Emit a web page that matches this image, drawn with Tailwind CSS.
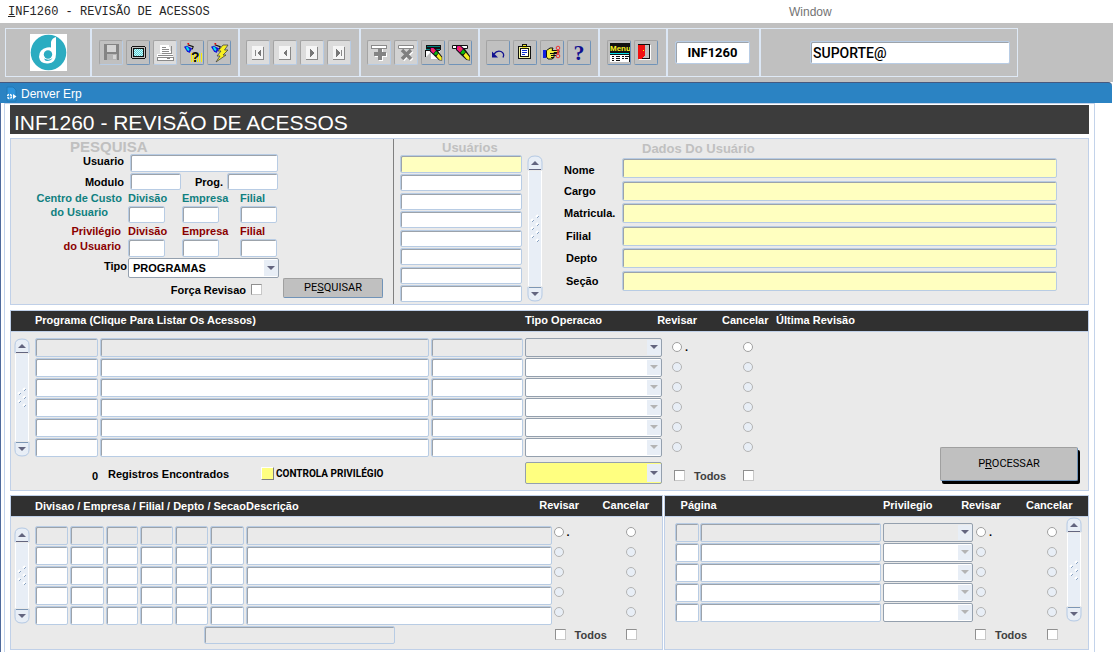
<!DOCTYPE html>
<html lang="pt-BR">
<head>
<meta charset="utf-8">
<meta name="viewport" content="width=device-width, initial-scale=1">
<title>INF1260 - Revisão de Acessos</title>
<script src="https://cdn.jsdelivr.net/npm/@tailwindcss/browser@4"></script>
</head>
<body class="bg-white font-['Liberation_Sans',Arial,sans-serif] text-[11px] leading-[14px] text-black">

<svg class="hidden" aria-hidden="true">
  <symbol id="up" viewBox="0 0 16 16"><path d="M1 15V7Q1 1 8 1T15 7V15" fill="#e8eef6" stroke="#b4c9e4"/><path d="M8 6L12 10H4Z" fill="#63657f"/><path d="M2 14.500H14" stroke="#63657f"/></symbol>
  <symbol id="down" viewBox="0 0 16 16"><path d="M1 1V9Q1 15 8 15T15 9V1" fill="#e8eef6" stroke="#b4c9e4"/><path d="M8 10L12 6H4Z" fill="#63657f"/><path d="M2 1.500H14" stroke="#7d97b5"/></symbol>
  <symbol id="grip" viewBox="0 0 12 30"><g stroke="#fff" stroke-width="2"><path d="M7 3l2-2M2 7l2-2M7 11l2-2M2 15l2-2M7 19l2-2M2 23l2-2M7 27l2-2"/></g><g stroke="#8aa3c2"><path d="M8 4l2-2M3 8l2-2M8 12l2-2M3 16l2-2M8 20l2-2M3 24l2-2M8 28l2-2"/></g></symbol>
  <symbol id="grip-s" viewBox="0 0 12 20"><g stroke="#fff" stroke-width="2"><path d="M7 3l2-2M2 7l2-2M7 11l2-2M2 15l2-2M7 19l2-2"/></g><g stroke="#8aa3c2"><path d="M8 4l2-2M3 8l2-2M8 12l2-2M3 16l2-2M8 20l2-2"/></g></symbol>
  <symbol id="arrow" viewBox="0 0 8 4"><path d="M0 0H8L4 4Z" fill="currentColor"/></symbol>
  <symbol id="torch" viewBox="0 0 12 12"><path d="M0 4L3 3L9 6L6 11L3 9Z" fill="#1414d8"/><path d="M2 4L4 4L6 7L5 9L3 7Z" fill="#00e5e5"/><path d="M4 2L10 4L9 7" stroke="#111" stroke-width="1.200" fill="none"/><path d="M4 0L5.500 1.500" stroke="#e00" stroke-width="1.500"/></symbol>
  <symbol id="marker" viewBox="0 0 16 16"><path d="M2 0H5L10 4L15 11V15.500L11.500 15L6 10L1 5V1Z" fill="#111"/><path d="M2.500 1H5L8 4L5 7.500L2 4.500V2Z" fill="#f01090"/><path d="M3 2.500H5.500L6.500 5L4.500 5.500Z" fill="#f04030"/><path d="M8 4.500L10.500 7L8 9.500L5.500 8Z" fill="#10b810"/><path d="M10.800 7.500L14.500 12V15L12 14.500L8.500 10.500Z" fill="#f8f020"/></symbol>
</svg>

<header>
  <nav class="flex h-[23px] items-center bg-white" aria-label="Menu">
    <a href="#" class="ml-2 w-[781px] font-['Liberation_Mono',monospace] text-xs text-neutral-800"><span class="underline">I</span>NF1260 - REVISÃO DE ACESSOS</a>
    <a href="#" class="text-xs text-neutral-500">Window</a>
  </nav>

  <div class="bg-[#c0c0c0] py-[5px] pl-[5px]">
    <div class="flex h-[49px] w-fit border border-[#c9d9ee] outline -outline-offset-1 outline-[#dfe9f5] divide-x-2 divide-[#dce7f5]">
      <div class="flex w-[86px] items-center justify-center">
        <svg width="37" height="37" viewBox="0 0 37 37" role="img" aria-label="Denver"><path fill="#fff" d="M0 0h37v37H0z"/><circle cx="18.500" cy="18.500" r="17.800" fill="#2bacc1"/><path d="M21 8Q22 4 26 3V20Q26 29 18 29.500Q10 30 9 23Q9 15 17 13.500Q20 13 21 13.500Z" fill="#fff"/><circle cx="18" cy="20.500" r="4.200" fill="#2bacc1"/><path d="M14 24.500Q19 27 22.500 24Q21 27 17 27Q15 27 14 24.500Z" fill="#2bacc1"/></svg>
      </div>

      <div class="flex w-[148px] items-center gap-[3px] pl-[7px]">
        <button aria-label="Salvar" disabled class="h-[25px] w-6 rounded-[2px] border border-t-[#a4a4a4] border-l-[#a4a4a4] border-r-[#b8cce4] border-b-[#b8cce4]"><svg width="22" height="23" viewBox="0 0 22 23" shape-rendering="crispEdges"><path fill="#848484" d="M4 3h14l1 1v15H4z"/><path fill="#d4d4d4" d="M7 4h9v7H7z"/><path fill="#b4b4b4" d="M7 13h10v6H7z"/><path fill="#d4d4d4" d="M13 14h3v4h-3z"/></svg></button>
        <button aria-label="Tela" class="h-[25px] w-6 rounded-[2px] border border-t-[#a4a4a4] border-l-[#a4a4a4] border-r-[#7093b8] border-b-[#7093b8]"><svg width="22" height="23" viewBox="0 0 22 23" shape-rendering="crispEdges"><path fill="#111" d="M5 5h13v1h1v11h-1v1H5v-1H4V6h1z"/><path fill="#c0c0c0" d="M5 6h13v11H5z"/><path fill="#111" d="M6 7h11v9H6z"/><path fill="#c8ffff" d="M7 8h9v7H7z"/><path stroke="#60ccd4" stroke-dasharray="1 1" fill="none" d="M7 8.500h9M8 9.500h8M7 10.500h9M8 11.500h8M7 12.500h9M8 13.500h8M7 14.500h9"/></svg></button>
        <button aria-label="Imprimir" disabled class="h-[25px] w-6 rounded-[2px] border border-t-[#a4a4a4] border-l-[#a4a4a4] border-r-[#b8cce4] border-b-[#b8cce4] bg-[#dcdcdc]"><svg width="22" height="23" viewBox="0 0 22 23" shape-rendering="crispEdges"><path fill="#fff" d="M6 4h9l2 8H6zM3 13h16v7H3z"/><path stroke="#8a8a8a" fill="none" d="M7.500 12.500h10V5M8 6.500h4M8 8.500h7M8 10.500h7M4 14.500h15M3.500 16.500h16v3h-16z"/><path fill="#888" d="M13 17h3v1h-3z"/></svg></button>
        <button aria-label="Consultar" class="h-[25px] w-6 rounded-[2px] border border-t-[#a4a4a4] border-l-[#a4a4a4] border-r-[#7093b8] border-b-[#7093b8]"><svg width="22" height="23" viewBox="0 0 22 23"><path stroke="#f4f000" stroke-width="9" stroke-dasharray="1 1" d="M10 16.500h11"/><use href="#torch" x="3" y="2" width="11" height="11"/><text x="10" y="21" font-family="Liberation Sans" font-size="14" font-weight="700" fill="#111">?</text></svg></button>
        <button aria-label="Executar consulta" class="h-[25px] w-6 rounded-[2px] border border-t-[#a4a4a4] border-l-[#a4a4a4] border-r-[#7093b8] border-b-[#7093b8]"><svg width="22" height="23" viewBox="0 0 22 23"><use href="#torch" x="3" y="2" width="11" height="11"/><path d="M15 4H20L16.500 9H20L15 14H18L8 21L12 15H9L13 10H10Z" fill="#f8f020" stroke="#444" stroke-width=".8"/></svg></button>
      </div>

      <div class="flex w-[121px] items-center gap-[3px] pl-[6px]">
        <button aria-label="Primeiro" disabled class="h-[25px] w-6 rounded-[2px] border border-t-[#a4a4a4] border-l-[#a4a4a4] border-r-[#b8cce4] border-b-[#b8cce4] bg-[#dcdcdc]"><svg width="22" height="23" viewBox="0 0 22 23" shape-rendering="crispEdges"><path fill="#f5f5f5" d="M5 5h11v13H5z"/><path stroke="#888" fill="none" d="M5 18.500h11.500V6M8.500 9v6"/><path fill="#777" d="M14 8v8l-4-4z"/></svg></button>
        <button aria-label="Anterior" disabled class="h-[25px] w-6 rounded-[2px] border border-t-[#a4a4a4] border-l-[#a4a4a4] border-r-[#b8cce4] border-b-[#b8cce4] bg-[#dcdcdc]"><svg width="22" height="23" viewBox="0 0 22 23" shape-rendering="crispEdges"><path fill="#f5f5f5" d="M5 5h11v13H5z"/><path stroke="#888" fill="none" d="M5 18.500h11.500V6"/><path fill="#777" d="M13 8v8l-4-4z"/></svg></button>
        <button aria-label="Próximo" disabled class="h-[25px] w-6 rounded-[2px] border border-t-[#a4a4a4] border-l-[#a4a4a4] border-r-[#b8cce4] border-b-[#b8cce4] bg-[#dcdcdc]"><svg width="22" height="23" viewBox="0 0 22 23" shape-rendering="crispEdges"><path fill="#f5f5f5" d="M5 5h11v13H5z"/><path stroke="#888" fill="none" d="M5 18.500h11.500V6"/><path fill="#777" d="M9 8v8l4-4z"/></svg></button>
        <button aria-label="Último" disabled class="h-[25px] w-6 rounded-[2px] border border-t-[#a4a4a4] border-l-[#a4a4a4] border-r-[#b8cce4] border-b-[#b8cce4] bg-[#dcdcdc]"><svg width="22" height="23" viewBox="0 0 22 23" shape-rendering="crispEdges"><path fill="#f5f5f5" d="M5 5h11v13H5z"/><path stroke="#888" fill="none" d="M5 18.500h11.500V6M13.500 9v6"/><path fill="#777" d="M8 8v8l4-4z"/></svg></button>
      </div>

      <div class="flex w-[119px] items-center gap-[3px] pl-[6px]">
        <button aria-label="Inserir registro" disabled class="h-[25px] w-6 rounded-[2px] border border-t-[#a4a4a4] border-l-[#a4a4a4] border-r-[#b8cce4] border-b-[#b8cce4] bg-[#d2d2d2]"><svg width="22" height="23" viewBox="0 0 22 23" shape-rendering="crispEdges"><path fill="#fff" stroke="#8a8a8a" d="M3.500 4.500h15v3h-15z"/><path stroke="#fff" stroke-width="4" d="M7 14h12M13 8v12"/><path stroke="#848484" stroke-width="4" d="M6 13h12M12 7v12"/></svg></button>
        <button aria-label="Excluir registro" disabled class="h-[25px] w-6 rounded-[2px] border border-t-[#a4a4a4] border-l-[#a4a4a4] border-r-[#b8cce4] border-b-[#b8cce4] bg-[#d2d2d2]"><svg width="22" height="23" viewBox="0 0 22 23"><path fill="#fff" stroke="#8a8a8a" d="M3.500 4.500h15v3h-15z"/><path stroke="#fff" stroke-width="3.500" d="M8 10l9 9m0-9l-9 9"/><path stroke="#808080" stroke-width="3.500" d="M7 9l9 9m0-9l-9 9"/></svg></button>
        <button aria-label="Limpar bloco" class="h-[25px] w-6 rounded-[2px] border border-t-[#a4a4a4] border-l-[#a4a4a4] border-r-[#7093b8] border-b-[#7093b8]"><svg width="22" height="23" viewBox="0 0 22 23"><g shape-rendering="crispEdges"><path fill="#fff" d="M4 9h14v9H4z"/><path fill="#111" d="M4 4h15v5H4zM3 9h15v1H4v6H3z"/><path fill="#008080" d="M5 5h13v1H5zM4 8h14v1H4z"/></g><path fill="#c0c0c0" d="M4 16l5-5v7H4z"/><use href="#marker" x="7" y="6" width="14" height="14"/></svg></button>
        <button aria-label="Limpar registro" class="h-[25px] w-6 rounded-[2px] border border-t-[#a4a4a4] border-l-[#a4a4a4] border-r-[#7093b8] border-b-[#7093b8]"><svg width="22" height="23" viewBox="0 0 22 23"><path fill="#fff" stroke="#111" d="M3.500 4.500h15v3h-15z"/><use href="#marker" x="6" y="4" width="16" height="16"/></svg></button>
      </div>

      <div class="flex w-[120px] items-center gap-[3px] pl-[6px]">
        <button aria-label="Desfazer" class="h-[25px] w-6 rounded-[2px] border border-t-[#a4a4a4] border-l-[#a4a4a4] border-r-[#7093b8] border-b-[#7093b8]"><svg width="22" height="23" viewBox="0 0 22 23"><path d="M7 13q3-4 7-2.500q4 2 2 6" fill="none" stroke="#101090" stroke-width="1.300"/><path d="M5 10.500v6h6z" fill="#101090"/></svg></button>
        <button aria-label="Área de transferência" class="h-[25px] w-6 rounded-[2px] border border-t-[#a4a4a4] border-l-[#a4a4a4] border-r-[#7093b8] border-b-[#7093b8]"><svg width="22" height="23" viewBox="0 0 22 23" shape-rendering="crispEdges"><path fill="#111" d="M4 5h13v13H4zM8 3h5v2H8z"/><path fill="#f4f4a0" d="M5 6h11v11H5z"/><path fill="#fff" stroke="#111" d="M6.500 7.500h8v8h-8z"/><path fill="#f0e820" d="M9 4h3v1H9zM8 6h5v1H8z"/><path stroke="#1030d0" d="M8 9.500h5M8 11.500h5M8 13.500h3"/></svg></button>
        <button aria-label="Lista de valores" class="h-[25px] w-6 rounded-[2px] border border-t-[#a4a4a4] border-l-[#a4a4a4] border-r-[#7093b8] border-b-[#7093b8]"><svg width="22" height="23" viewBox="0 0 22 23"><path fill="#1020e0" d="M2 9h3v8H2z"/><path fill="#f4ee40" stroke="#111" d="M5.500 9.500L9 7h3l-1 2.500h7v2h-5v5l-2 1.500H7l-1.500-2z"/><path stroke="#111" d="M9 12.500h7M10 14.500h5M10 16.500h3"/><circle cx="17" cy="7" r="1.800" fill="none" stroke="#f03030"/><circle cx="17" cy="15" r="1.800" fill="none" stroke="#f03030"/><path d="M16 9l2 4M18 9l-2 4" stroke="#f03030"/></svg></button>
        <button aria-label="Ajuda" class="h-[25px] w-6 rounded-[2px] border border-t-[#a4a4a4] border-l-[#a4a4a4] border-r-[#7093b8] border-b-[#7093b8]"><svg width="22" height="23" viewBox="0 0 22 23"><text x="11" y="19" text-anchor="middle" font-family="Liberation Serif" font-size="22" font-weight="700" fill="#101090">?</text></svg></button>
      </div>

      <div class="flex w-[68px] items-center gap-[3px] pl-[7px]">
        <button aria-label="Menu" class="h-[25px] w-6 rounded-[2px] border border-t-[#a4a4a4] border-l-[#a4a4a4] border-r-[#7093b8] border-b-[#7093b8]"><svg width="22" height="23" viewBox="0 0 22 23"><g shape-rendering="crispEdges"><path fill="#111" d="M2 2h20v19H2z"/><path fill="#00e0e8" d="M2 12h19v1H2z"/><path fill="#fff" d="M2 14h19v7H2z"/><path stroke="#111" d="M4 15.500h2M8 15.500h4M14 15.500h2M17 15.500h4M4 17.500h2M8 17.500h4M14 17.500h2M17 17.500h3M4 19.500h2M8 19.500h4"/></g><text x="2" y="10" font-family="Liberation Sans" font-size="8" font-weight="700" fill="#f8f020">Menu</text></svg></button>
        <button aria-label="Sair" class="h-[25px] w-6 rounded-[2px] border border-t-[#a4a4a4] border-l-[#a4a4a4] border-r-[#7093b8] border-b-[#7093b8]"><svg width="22" height="23" viewBox="0 0 22 23" shape-rendering="crispEdges"><path fill="#c0c0c0" stroke="#111" d="M3.500 3.500h11v14h-11z"/><path fill="#fff" d="M15 4h1v15H4v-1h11z"/><path fill="#f01010" d="M3 4h7v11l-4 3H3z"/><path fill="#ff0" d="M8 9h1v1H8z"/></svg></button>
      </div>

      <div class="flex w-[93px] items-center pl-[7px]">
        <input aria-label="Programa atual" value="INF1260" class="h-[23px] w-[75px] rounded-[2px] border border-[#b8cce4] bg-white text-center font-[Roboto,sans-serif] text-[13px] font-bold shadow-[inset_1px_1px_0_#9ca3ab]">
      </div>
      <div class="flex w-[256px] items-center pl-[49px]">
        <input aria-label="Usuário conectado" value="SUPORTE@" class="h-[23px] w-[200px] rounded-[2px] border border-[#b8cce4] bg-white pl-[2px] font-[Roboto,sans-serif] text-sm font-medium shadow-[inset_1px_1px_0_#9ca3ab]">
      </div>
    </div>
  </div>
</header>

<div class="mr-px flex h-[21px] items-center gap-1 rounded-tr-sm border-t border-[#46597f] bg-[#2b83c3] pt-px pl-[6px] text-xs text-white">
  <svg width="11" height="16" viewBox="0 0 11 16" aria-hidden="true"><path d="M1 1H7L10 4V15H1Z" fill="#2e94dc" stroke="#2378b4"/><circle cx="3.500" cy="10.500" r="2" fill="none" stroke="#fff" stroke-width="1.500" stroke-dasharray="2 1"/><path d="M7 8L10.500 10.500L7 13Z" fill="#fff"/></svg>
  Denver Erp
</div>

<main class="border-l border-[#4f6a9c] pr-[18px] pl-[3px]">
<div class="border border-[#c3d3ea] px-[5px] pt-px pb-[2px]">
  <h1 class="flex h-[29px] items-center bg-[#3c3c3c] pt-[6px] pl-1 text-[21px] leading-[24px] text-white">INF1260 - REVISÃO DE ACESSOS</h1>

  <section class="mt-1 flex h-[167px] border border-[#c0d0e8] bg-[#eaeaea] font-bold">
    <form class="w-[383px] shrink-0 border-r border-[#808080]" onsubmit="return false">
      <h2 class="h-[15px] pl-[59px] text-[15px] leading-[16px] text-[#c0c0c0]">PESQUISA</h2>
      <div class="flex">
        <label for="usuario" class="w-[113px] text-right">Usuario</label>
        <input id="usuario" class="ml-[6px] h-[18px] w-[148px] rounded-[2px] border border-[#b8cce4] bg-white px-1 shadow-[inset_1px_1px_0_#9ca3ab]">
      </div>
      <div class="mt-px flex items-center">
        <label for="modulo" class="w-[113px] text-right">Modulo</label>
        <input id="modulo" class="ml-[6px] h-[17px] w-[51px] rounded-[2px] border border-[#b8cce4] bg-white px-1 shadow-[inset_1px_1px_0_#9ca3ab]">
        <label for="prog" class="w-[42px] text-right">Prog.</label>
        <input id="prog" class="ml-[4px] h-[17px] w-[51px] rounded-[2px] border border-[#b8cce4] bg-white px-1 shadow-[inset_1px_1px_0_#9ca3ab]">
      </div>
      <fieldset class="mt-px flex text-[#108080]">
        <div class="w-[117px] pr-[6px] text-right leading-[14px]"><div class="inline-block text-center">Centro de Custo<br>do Usuario</div></div>
        <div class="grid grid-cols-[54px_58px_38px] text-black">
          <label for="cc-div" class="leading-[15px] text-[#108080]">Divisão</label><label for="cc-emp" class="leading-[15px] text-[#108080]">Empresa</label><label for="cc-fil" class="leading-[15px] text-[#108080]">Filial</label>
          <input id="cc-div" class="h-[17px] w-[37px] rounded-[2px] border border-[#b8cce4] bg-white shadow-[inset_1px_1px_0_#9ca3ab]"><input id="cc-emp" class="h-[17px] w-[37px] rounded-[2px] border border-[#b8cce4] bg-white shadow-[inset_1px_1px_0_#9ca3ab]"><input id="cc-fil" class="h-[17px] w-[37px] rounded-[2px] border border-[#b8cce4] bg-white shadow-[inset_1px_1px_0_#9ca3ab]">
        </div>
      </fieldset>
      <fieldset class="mt-px flex text-[#8b0000]">
        <div class="w-[117px] pr-[7px] text-right leading-[15px]">Privilégio<br>do Usuario</div>
        <div class="grid grid-cols-[54px_58px_38px] text-black">
          <label for="pr-div" class="leading-[15px] text-[#8b0000]">Divisão</label><label for="pr-emp" class="leading-[15px] text-[#8b0000]">Empresa</label><label for="pr-fil" class="leading-[15px] text-[#8b0000]">Filial</label>
          <input id="pr-div" class="h-[18px] w-[37px] rounded-[2px] border border-[#b8cce4] bg-white shadow-[inset_1px_1px_0_#9ca3ab]"><input id="pr-emp" class="h-[18px] w-[37px] rounded-[2px] border border-[#b8cce4] bg-white shadow-[inset_1px_1px_0_#9ca3ab]"><input id="pr-fil" class="h-[18px] w-[37px] rounded-[2px] border border-[#b8cce4] bg-white shadow-[inset_1px_1px_0_#9ca3ab]">
        </div>
      </fieldset>
      <div class="mt-px flex">
        <label for="tipo" class="w-[116px] pt-px text-right">Tipo</label>
        <div class="relative ml-px h-[20px] w-[151px]">
          <select id="tipo" class="block size-full appearance-none rounded-[2px] border border-[#94a0ae] bg-white pl-1 outline-none"><option>PROGRAMAS</option></select>
          <span class="pointer-events-none absolute inset-y-[2px] right-px flex w-[14px] items-center justify-center bg-[#e8eef6] text-[#63657f]"><svg width="8" height="4"><use href="#arrow"/></svg></span>
        </div>
      </div>
      <div class="flex">
        <label for="forca" class="w-[235px] pt-[5px] text-right">Força Revisao</label>
        <input id="forca" type="checkbox" class="mt-[6px] ml-[5px] size-[11px] appearance-none border border-t-[#909090] border-l-[#909090] border-r-[#c8c8c8] border-b-[#c8c8c8] bg-white checked:bg-neutral-600">
        <button class="ml-[21px] h-[20px] w-[100px] rounded-[2px] border border-t-[#a0a0a0] border-l-[#a0a0a0] border-r-[#7093b8] border-b-[#7093b8] bg-[#c0c0c0] font-[Roboto,sans-serif] font-normal">PE<span class="underline">S</span>QUISAR</button>
      </div>
    </form>

    <div class="ml-[6px] w-[122px] shrink-0">
      <h2 class="h-4 pl-[42px] text-[13px] leading-[18px] text-[#c0c0c0]">Usuários</h2>
      <div class="flex h-[147px] flex-col justify-between">
        <input aria-label="Usuário selecionado" class="h-[18px] w-full rounded-[2px] border border-[#b8cce4] bg-[#ffffc0] shadow-[inset_1px_1px_0_#9ca3ab]">
        <input aria-label="Usuário" data-repeat="7" class="h-[17px] w-full rounded-[2px] border border-[#b8cce4] bg-white shadow-[inset_1px_1px_0_#9ca3ab]">
      </div>
    </div>
    <div class="mt-4 ml-[5px] flex h-[147px] w-4 shrink-0 flex-col" role="scrollbar" aria-label="Rolar usuários" aria-controls="dados" aria-valuenow="0">
      <svg width="16" height="16"><use href="#up"/></svg>
      <div class="mx-px flex grow items-center justify-center border-x border-white bg-[#e8eef6]"><svg width="12" height="30"><use href="#grip"/></svg></div>
      <svg width="16" height="16"><use href="#down"/></svg>
    </div>

    <div id="dados" class="min-w-0 grow pr-[31px] pl-[21px]">
      <h2 class="h-[19px] pl-[78px] text-[13px] leading-[20px] text-[#c0c0c0]">Dados Do Usuário</h2>
      <div class="flex h-[133px] flex-col justify-between">
        <div class="flex items-center"><label for="nome" class="w-[58px] shrink-0 pt-1">Nome</label><input id="nome" class="h-5 min-w-0 grow rounded-[2px] border border-[#b8cce4] bg-[#ffffc0] shadow-[inset_1px_1px_0_#9ca3ab]"></div>
        <div class="flex items-center"><label for="cargo" class="w-[58px] shrink-0">Cargo</label><input id="cargo" class="h-5 min-w-0 grow rounded-[2px] border border-[#b8cce4] bg-[#ffffc0] shadow-[inset_1px_1px_0_#9ca3ab]"></div>
        <div class="flex items-center"><label for="matricula" class="w-[58px] shrink-0">Matricula.</label><input id="matricula" class="h-5 min-w-0 grow rounded-[2px] border border-[#b8cce4] bg-[#ffffc0] shadow-[inset_1px_1px_0_#9ca3ab]"></div>
        <div class="flex items-center"><label for="filial" class="w-[58px] shrink-0 pl-[2px]">Filial</label><input id="filial" class="h-5 min-w-0 grow rounded-[2px] border border-[#b8cce4] bg-[#ffffc0] shadow-[inset_1px_1px_0_#9ca3ab]"></div>
        <div class="flex items-center"><label for="depto" class="w-[58px] shrink-0 pl-[2px]">Depto</label><input id="depto" class="h-5 min-w-0 grow rounded-[2px] border border-[#b8cce4] bg-[#ffffc0] shadow-[inset_1px_1px_0_#9ca3ab]"></div>
        <div class="flex items-center"><label for="secao" class="w-[58px] shrink-0 pl-[2px]">Seção</label><input id="secao" class="h-5 min-w-0 grow rounded-[2px] border border-[#b8cce4] bg-[#ffffc0] shadow-[inset_1px_1px_0_#9ca3ab]"></div>
      </div>
    </div>
  </section>

  <section class="mt-[5px] border border-[#c0d0e8] bg-[#eaeaea]">
    <table class="w-full table-fixed border-separate border-spacing-0 font-bold">
      <colgroup><col class="w-[24px]"><col class="w-[65px]"><col class="w-[331px]"><col class="w-[94px]"><col class="w-[137px]"><col class="w-[30px]"><col class="w-[30px]"><col class="w-[54px]"><col></colgroup>
      <thead>
        <tr class="h-[20px] bg-[#303030] text-left text-white">
          <th class="p-0 pb-[2px]"></th><th colspan="3" class="p-0 pb-[2px]">Programa (Clique Para Listar Os Acessos)</th><th class="p-0 pb-[2px]">Tipo Operacao</th><th class="p-0 pb-[2px]"><div class="flex justify-center">Revisar</div></th><th class="p-0 pb-[2px]"></th><th class="p-0 pb-[2px]">Cancelar</th><th class="p-0 pb-[2px]">Última Revisão</th>
        </tr>
      </thead>
      <tbody>
        <tr class="h-[6px]"><td colspan="9" class="border-t border-[#c0d0e8] p-0"></td></tr>
        <tr class="h-5">
          <td rowspan="6" class="h-[120px] p-0 pl-[3px]">
            <div class="flex h-[119px] w-4 flex-col" role="scrollbar" aria-label="Rolar programas" aria-controls="prog-total" aria-valuenow="0">
              <svg width="16" height="16"><use href="#up"/></svg>
              <div class="mx-px flex grow items-center justify-center border-x border-white bg-[#e8eef6]"><svg width="12" height="20"><use href="#grip-s"/></svg></div>
              <svg width="16" height="16"><use href="#down"/></svg>
            </div>
          </td>
          <td class="p-0 pr-[2px]"><input aria-label="Código" class="block h-[19px] w-full rounded-[2px] border border-[#b8cce4] shadow-[inset_1px_1px_0_#9ca3ab]"></td>
          <td class="p-0 pr-[2px]"><input aria-label="Programa" class="block h-[19px] w-full rounded-[2px] border border-[#b8cce4] shadow-[inset_1px_1px_0_#9ca3ab]"></td>
          <td class="p-0 pr-[2px]"><input aria-label="Detalhe" class="block h-[19px] w-full rounded-[2px] border border-[#b8cce4] shadow-[inset_1px_1px_0_#9ca3ab]"></td>
          <td class="p-0"><div class="relative h-[19px]"><select aria-label="Tipo Operacao" class="block size-full appearance-none rounded-[2px] border border-[#94a0ae]"></select><span class="pointer-events-none absolute inset-y-[2px] right-px flex w-[14px] items-center justify-center bg-[#e8eef6] text-[#63657f]"><svg width="8" height="4"><use href="#arrow"/></svg></span></div></td>
          <td class="p-0"><div class="flex items-center gap-[3px] pl-[10px]"><input type="radio" name="p1" aria-label="Revisar" class="size-[10px] shrink-0 appearance-none rounded-full border border-[#a0a0a0] bg-white checked:bg-neutral-600">.</div></td>
          <td class="p-0"></td>
          <td class="p-0 pl-[21px]"><input type="radio" name="p1" aria-label="Cancelar" class="block size-[10px] appearance-none rounded-full border border-[#a0a0a0] bg-white checked:bg-neutral-600"></td>
          <td rowspan="7" class="p-0 pr-[10px] pb-[9px] text-right align-bottom"><button class="h-[34px] w-[138px] rounded-[2px] border border-t-[#a0a0a0] border-l-[#a0a0a0] border-r-[#7093b8] border-b-[#7093b8] bg-[#c0c0c0] font-[Roboto,sans-serif] font-normal shadow-[2px_3px_0_#000]">P<span class="underline">R</span>OCESSAR</button></td>
        </tr>
        <tr class="h-5" data-repeat="5">
          <td class="p-0 pr-[2px]"><input aria-label="Código" class="block h-[19px] w-full rounded-[2px] border border-[#b8cce4] bg-white shadow-[inset_1px_1px_0_#9ca3ab]"></td>
          <td class="p-0 pr-[2px]"><input aria-label="Programa" class="block h-[19px] w-full rounded-[2px] border border-[#b8cce4] bg-white shadow-[inset_1px_1px_0_#9ca3ab]"></td>
          <td class="p-0 pr-[2px]"><input aria-label="Detalhe" class="block h-[19px] w-full rounded-[2px] border border-[#b8cce4] bg-white shadow-[inset_1px_1px_0_#9ca3ab]"></td>
          <td class="p-0"><div class="relative h-[19px]"><select disabled aria-label="Tipo Operacao" class="block size-full appearance-none rounded-[2px] border border-[#94a0ae] bg-white opacity-100"></select><span class="pointer-events-none absolute inset-y-[2px] right-px flex w-[14px] items-center justify-center bg-[#e8eef6] text-[#b4b4b4]"><svg width="8" height="4"><use href="#arrow"/></svg></span></div></td>
          <td class="p-0 pl-[10px]"><input disabled type="radio" aria-label="Revisar" class="block size-[10px] appearance-none rounded-full border border-[#b4b4b4] bg-[#e8eef6]"></td>
          <td class="p-0"></td>
          <td class="p-0 pl-[21px]"><input disabled type="radio" aria-label="Cancelar" class="block size-[10px] appearance-none rounded-full border border-[#b4b4b4] bg-[#e8eef6]"></td>
        </tr>
        <tr class="h-[33px]">
          <td colspan="4" class="p-0">
            <div class="flex items-center"><output id="prog-total" class="w-[87px] pt-1 text-right">0</output><span class="ml-[10px] w-[153px]">Registros Encontrados</span><span class="size-[13px] border border-t-white border-l-white border-r-[#808080] border-b-[#808080] bg-[#ffff80]"></span><span class="ml-[2px] font-[Roboto,sans-serif] text-[10px]">CONTROLA PRIVILÉGIO</span></div>
          </td>
          <td class="p-0 pb-px"><div class="relative h-[22px]"><select aria-label="Tipo Operacao para todos" class="block size-full appearance-none rounded-[2px] border border-[#94a0ae] bg-[#ffff80]"></select><span class="pointer-events-none absolute inset-y-[2px] right-px flex w-[14px] items-center justify-center bg-[#e8eef6] text-[#63657f]"><svg width="8" height="4"><use href="#arrow"/></svg></span></div></td>
          <td class="p-0 pt-[3px] pl-[12px]"><input id="todos-p" type="checkbox" class="block size-[11px] appearance-none border border-t-[#909090] border-l-[#909090] border-r-[#c8c8c8] border-b-[#c8c8c8] bg-white checked:bg-neutral-600"></td>
          <td class="p-0 pt-1 pl-[2px] text-[#404040]"><label for="todos-p">Todos</label></td>
          <td class="p-0 pt-[3px] pl-[21px]"><input aria-label="Cancelar todos" type="checkbox" class="block size-[11px] appearance-none border border-t-[#909090] border-l-[#909090] border-r-[#c8c8c8] border-b-[#c8c8c8] bg-white checked:bg-neutral-600"></td>
        </tr>
      </tbody>
    </table>
  </section>

  <div class="mt-1 flex gap-px">
    <section class="min-w-0 flex-[653] border border-[#c0d0e8] bg-[#eaeaea]">
      <table class="w-full table-fixed border-separate border-spacing-0 font-bold">
        <colgroup><col class="w-[24px]"><col class="w-[35px]"><col class="w-[36px]"><col class="w-[34px]"><col class="w-[35px]"><col class="w-[35px]"><col class="w-[36px]"><col><col class="w-[15px]"><col class="w-[36px]"><col class="w-[59px]"></colgroup>
        <thead>
          <tr class="h-[20px] bg-[#303030] text-left text-white">
            <th class="p-0 pb-px"></th><th colspan="6" class="p-0 pb-px whitespace-nowrap">Divisao / Empresa / Filial / Depto / Secao</th><th class="p-0 pb-px">Descrição</th><th class="p-0 pb-[2px]"><div class="flex justify-center">Revisar</div></th><th class="p-0 pb-[2px]"></th><th class="p-0 pb-[2px]">Cancelar</th>
          </tr>
        </thead>
        <tbody>
          <tr class="h-[9px]"><td colspan="11" class="border-t border-[#c0d0e8] p-0"></td></tr>
          <tr class="h-5">
            <td rowspan="5" class="h-[100px] p-0 pl-[3px]">
              <div class="flex h-[97px] w-4 flex-col" role="scrollbar" aria-label="Rolar centros de custo" aria-controls="cc-msg" aria-valuenow="0">
                <svg width="16" height="16"><use href="#up"/></svg>
                <div class="mx-px flex grow items-center justify-center border-x border-white bg-[#e8eef6]"><svg width="12" height="20"><use href="#grip-s"/></svg></div>
                <svg width="16" height="16"><use href="#down"/></svg>
              </div>
            </td>
            <td data-repeat="6" class="p-0 pr-[2px]"><input aria-label="Código" class="block h-[19px] w-full rounded-[2px] border border-[#b8cce4] shadow-[inset_1px_1px_0_#9ca3ab]"></td>
            <td class="p-0"><input aria-label="Descrição" class="block h-[19px] w-full rounded-[2px] border border-[#b8cce4] shadow-[inset_1px_1px_0_#9ca3ab]"></td>
            <td class="p-0 pb-[7px]"><div class="flex h-3 items-center gap-[3px] pl-[2px]"><input type="radio" name="c1" aria-label="Revisar" class="size-[10px] shrink-0 appearance-none rounded-full border border-[#a0a0a0] bg-white checked:bg-neutral-600">.</div></td>
            <td class="p-0"></td>
            <td class="p-0 pb-[7px] pl-[23px]"><input type="radio" name="c1" aria-label="Cancelar" class="block size-[10px] appearance-none rounded-full border border-[#a0a0a0] bg-white checked:bg-neutral-600"></td>
          </tr>
          <tr class="h-5" data-repeat="4">
            <td data-repeat="6" class="p-0 pr-[2px]"><input aria-label="Código" class="block h-[19px] w-full rounded-[2px] border border-[#b8cce4] bg-white shadow-[inset_1px_1px_0_#9ca3ab]"></td>
            <td class="p-0"><input aria-label="Descrição" class="block h-[19px] w-full rounded-[2px] border border-[#b8cce4] bg-white shadow-[inset_1px_1px_0_#9ca3ab]"></td>
            <td class="p-0 pb-[7px] pl-[2px]"><input disabled type="radio" aria-label="Revisar" class="block size-[10px] appearance-none rounded-full border border-[#b4b4b4] bg-[#e8eef6]"></td>
            <td class="p-0"></td>
            <td class="p-0 pb-[7px] pl-[23px]"><input disabled type="radio" aria-label="Cancelar" class="block size-[10px] appearance-none rounded-full border border-[#b4b4b4] bg-[#e8eef6]"></td>
          </tr>
          <tr class="h-[24px]">
            <td colspan="8" class="p-0 pt-px pl-[193px] align-top"><input id="cc-msg" aria-label="Mensagem" readonly class="block h-[18px] w-[191px] rounded-[2px] border border-[#b8cce4] shadow-[inset_1px_1px_0_#9ca3ab]"></td>
            <td class="p-0 pb-[6px] pl-[3px]"><input id="todos-c" type="checkbox" class="block size-[11px] appearance-none border border-t-[#909090] border-l-[#909090] border-r-[#c8c8c8] border-b-[#c8c8c8] bg-white checked:bg-neutral-600"></td>
            <td class="p-0 pb-1 pl-[8px] text-[#404040]"><label for="todos-c">Todos</label></td>
            <td class="p-0 pb-[6px] pl-[23px]"><input aria-label="Cancelar todos" type="checkbox" class="block size-[11px] appearance-none border border-t-[#909090] border-l-[#909090] border-r-[#c8c8c8] border-b-[#c8c8c8] bg-white checked:bg-neutral-600"></td>
          </tr>
        </tbody>
      </table>
    </section>

    <section class="min-w-0 flex-[425] border border-[#c0d0e8] bg-[#eaeaea]">
      <table class="w-full table-fixed border-separate border-spacing-0 font-bold">
        <colgroup><col class="w-[10px]"><col class="w-[25px]"><col><col class="w-[90px]"><col class="w-[16px]"><col class="w-[37px]"><col class="w-[40px]"><col class="w-[22px]"></colgroup>
        <thead>
          <tr class="h-[20px] bg-[#303030] text-left text-white">
            <th class="p-0 pb-[2px]"></th><th colspan="2" class="p-0 pb-[2px] pl-[6px]">Página</th><th class="p-0 pb-[2px]">Privilegio</th><th class="p-0 pb-[2px]"><div class="flex justify-center">Revisar</div></th><th class="p-0 pb-[2px]"></th><th class="p-0 pb-[2px]">Cancelar</th><th class="p-0 pb-[2px]"></th>
          </tr>
        </thead>
        <tbody>
          <tr class="h-[6px]">
            <td colspan="7" class="border-t border-[#c0d0e8] p-0"></td>
            <td rowspan="6" class="h-[106px] border-t border-[#c0d0e8] p-0">
              <div class="flex h-[105px] w-4 flex-col" role="scrollbar" aria-label="Rolar páginas" aria-controls="todos-g" aria-valuenow="0">
                <svg width="16" height="16"><use href="#up"/></svg>
                <div class="mx-px flex grow items-center justify-center border-x border-white bg-[#e8eef6]"><svg width="12" height="20"><use href="#grip-s"/></svg></div>
                <svg width="16" height="16"><use href="#down"/></svg>
              </div>
            </td>
          </tr>
          <tr class="h-5">
            <td class="p-0"></td>
            <td class="p-0 pr-px"><input aria-label="Código" class="block h-[19px] w-full rounded-[2px] border border-[#b8cce4] shadow-[inset_1px_1px_0_#9ca3ab]"></td>
            <td class="p-0 pr-[2px]"><input aria-label="Página" class="block h-[19px] w-full rounded-[2px] border border-[#b8cce4] shadow-[inset_1px_1px_0_#9ca3ab]"></td>
            <td class="p-0"><div class="relative h-[19px]"><select aria-label="Privilegio" class="block size-full appearance-none rounded-[2px] border border-[#94a0ae]"></select><span class="pointer-events-none absolute inset-y-[2px] right-px flex w-[14px] items-center justify-center bg-[#e8eef6] text-[#63657f]"><svg width="8" height="4"><use href="#arrow"/></svg></span></div></td>
            <td class="p-0"><div class="flex items-center gap-[3px] pl-[3px]"><input type="radio" name="g1" aria-label="Revisar" class="size-[10px] shrink-0 appearance-none rounded-full border border-[#a0a0a0] bg-white checked:bg-neutral-600">.</div></td>
            <td class="p-0"></td>
            <td class="p-0 pl-[21px]"><input type="radio" name="g1" aria-label="Cancelar" class="block size-[10px] appearance-none rounded-full border border-[#a0a0a0] bg-white checked:bg-neutral-600"></td>
          </tr>
          <tr class="h-5" data-repeat="4">
            <td class="p-0"></td>
            <td class="p-0 pr-px"><input aria-label="Código" class="block h-[19px] w-full rounded-[2px] border border-[#b8cce4] bg-white shadow-[inset_1px_1px_0_#9ca3ab]"></td>
            <td class="p-0 pr-[2px]"><input aria-label="Página" class="block h-[19px] w-full rounded-[2px] border border-[#b8cce4] bg-white shadow-[inset_1px_1px_0_#9ca3ab]"></td>
            <td class="p-0"><div class="relative h-[19px]"><select disabled aria-label="Privilegio" class="block size-full appearance-none rounded-[2px] border border-[#94a0ae] bg-white opacity-100"></select><span class="pointer-events-none absolute inset-y-[2px] right-px flex w-[14px] items-center justify-center bg-[#e8eef6] text-[#b4b4b4]"><svg width="8" height="4"><use href="#arrow"/></svg></span></div></td>
            <td class="p-0 pl-[3px]"><input disabled type="radio" aria-label="Revisar" class="block size-[10px] appearance-none rounded-full border border-[#b4b4b4] bg-[#e8eef6]"></td>
            <td class="p-0"></td>
            <td class="p-0 pl-[21px]"><input disabled type="radio" aria-label="Cancelar" class="block size-[10px] appearance-none rounded-full border border-[#b4b4b4] bg-[#e8eef6]"></td>
          </tr>
          <tr class="h-[27px]">
            <td colspan="4" class="p-0"></td>
            <td class="p-0 pb-[3px] pl-[2px]"><input id="todos-g" type="checkbox" class="block size-[11px] appearance-none border border-t-[#909090] border-l-[#909090] border-r-[#c8c8c8] border-b-[#c8c8c8] bg-white checked:bg-neutral-600"></td>
            <td class="p-0 pb-px pl-[6px] text-[#404040]"><label for="todos-g">Todos</label></td>
            <td colspan="2" class="p-0 pb-[3px] pl-[21px]"><input aria-label="Cancelar todos" type="checkbox" class="block size-[11px] appearance-none border border-t-[#909090] border-l-[#909090] border-r-[#c8c8c8] border-b-[#c8c8c8] bg-white checked:bg-neutral-600"></td>
          </tr>
        </tbody>
      </table>
    </section>
  </div>
</div>
</main>

<script>
// Fill each list with copies of its blank record; inner cells are expanded before their rows.
[...document.querySelectorAll('[data-repeat]')].reverse().forEach(el => {
  const n = +el.dataset.repeat;
  el.removeAttribute('data-repeat');
  for (let i = 1; i < n; i++) el.after(el.cloneNode(true));
});
</script>
</body>
</html>
